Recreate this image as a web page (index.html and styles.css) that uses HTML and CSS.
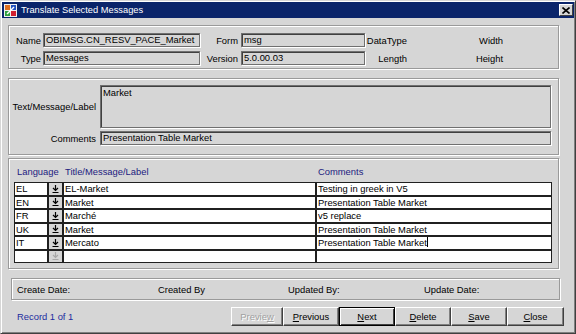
FILE: index.html
```html
<!DOCTYPE html>
<html lang="en">
<head>
  <meta charset="UTF-8">
  <title>Translate Selected Messages</title>
  <link rel="stylesheet" href="styles.css">
</head>
<body>

  <div class="window">
    <div class="titlebar">
      <svg class="appicon" width="13" height="13" viewBox="0 0 13 13">
        <rect x="0" y="0" width="13" height="13" fill="#f0f0f0"/>
        <rect x="1" y="1" width="5" height="5" fill="#e07020"/>
        <rect x="7" y="1" width="5" height="5" fill="#2050c0"/>
        <rect x="1" y="7" width="5" height="5" fill="#30a040"/>
        <rect x="7" y="7" width="5" height="5" fill="#d02030"/>
        <path d="M3 10 L10 3" stroke="#fff" stroke-width="1.5"/>
      </svg>
      <span class="title">Translate Selected Messages</span>
      <span class="closebox">
        <svg width="8" height="7" viewBox="0 0 8 7"><path d="M0.5 0.5 L7.5 6.5 M7.5 0.5 L0.5 6.5" stroke="#000" stroke-width="1.6"/></svg>
      </span>
    </div>

    <div class="group info">
      <label class="lbl">Name</label>
      <div class="field">OBIMSG.CN_RESV_PACE_Market</div>
      <label class="lbl">Form</label>
      <div class="field">msg</div>
      <span class="plain">DataType</span>
      <span class="plain">Width</span>

      <label class="lbl">Type</label>
      <div class="field">Messages</div>
      <label class="lbl">Version</label>
      <div class="field">5.0.00.03</div>
      <span class="plain">Length</span>
      <span class="plain">Height</span>
    </div>

    <div class="group message">
      <label class="lbl">Text/Message/Label</label>
      <div class="field area">Market</div>
      <label class="lbl">Comments</label>
      <div class="field">Presentation Table Market</div>
    </div>

    <div class="group translations">
      <div class="thead">
        <span>Language</span>
        <span>Title/Message/Label</span>
        <span>Comments</span>
      </div>
      <div class="rows" id="rows"></div>
    </div>

    <div class="group audit">
      <span>Create Date:</span>
      <span>Created By</span>
      <span>Updated By:</span>
      <span>Update Date:</span>
    </div>

    <div class="bottom">
      <span class="record">Record 1 of 1</span>
      <div class="buttons">
        <button class="btn preview" disabled>Previe<u>w</u></button>
        <button class="btn"><u>P</u>revious</button>
        <button class="btn default"><u>N</u>ext</button>
        <button class="btn"><u>D</u>elete</button>
        <button class="btn"><u>S</u>ave</button>
        <button class="btn close"><u>C</u>lose</button>
      </div>
    </div>
  </div>

  <script>
    const translations = [
      ['EL', 'EL-Market', 'Testing in greek in V5'],
      ['EN', 'Market', 'Presentation Table Market'],
      ['FR', 'Marché', 'v5 replace'],
      ['UK', 'Market', 'Presentation Table Market'],
      ['IT', 'Mercato', 'Presentation Table Market'],
      ['', '', '']
    ];

    const arrow = `<svg width="7" height="8" viewBox="0 0 7 8"><path d="M3.5 0 V5 M1 3 L3.5 5.5 L6 3 M0.5 7.5 H6.5" stroke="currentColor" stroke-width="1.2" fill="none"/></svg>`;

    const rows = document.getElementById('rows');
    translations.forEach(function (t, i) {
      const empty = t[0] === '';
      const editing = i === 4;
      rows.innerHTML += `
        <div class="cell">${t[0]}</div>
        <div class="lov ${empty ? 'off' : ''}">${arrow}</div>
        <div class="cell">${t[1]}</div>
        <div class="cell">${t[2]}${editing ? '<span class="caret"></span>' : ''}</div>
      `;
    });
  </script>

</body>
</html>
```

FILE: styles.css
```css
body {
  margin: 0;
  padding: 0;
  font-family: 'Liberation Sans', Arial, sans-serif;
  font-size: 9.4px;
  color: #000;
}

.window {
  width: 576px;
  height: 334px;
  box-sizing: border-box;
  background-color: #d6d6d6;
  border: 1px solid #404040;
  border-top-color: #d6d6d6;
  border-left-color: #d6d6d6;
  box-shadow: inset 1px 1px 0 #fff, inset -1px -1px 0 #808080;
  padding: 1px 1px 0 1px;
  display: flex;
  flex-direction: column;
}

.titlebar {
  height: 16px;
  background-color: #0a246a;
  display: flex;
  align-items: center;
  padding-left: 2px;
  padding-right: 1px;
}

.appicon {
  margin-right: 4px;
}

.title {
  color: #fff;
  font-size: 9.3px;
  flex: 1;
}

.closebox {
  width: 12px;
  height: 10px;
  background-color: #d6d6d6;
  border: 1px solid #404040;
  border-top-color: #fff;
  border-left-color: #fff;
  display: flex;
  align-items: center;
  justify-content: center;
}

.group {
  margin-left: 6px;
  width: 551px;
  box-sizing: border-box;
  border: 1px solid #9a9a9a;
  box-shadow: 1px 1px 0 #fff, inset 1px 1px 0 #fff;
}

.field {
  background-color: #d6d6d6;
  border: 1px solid #707070;
  box-shadow: inset 1px 1px 0 #404040, 1px 1px 0 #fff;
  box-sizing: border-box;
  padding: 0 2px;
  line-height: 12px;
  white-space: nowrap;
  overflow: hidden;
}

.lbl {
  text-align: right;
  padding-right: 2px;
  align-self: center;
  white-space: nowrap;
}

.plain {
  text-align: right;
  align-self: center;
}

/* name / form / type block */
.info {
  margin-top: 7px;
  height: 44px;
  padding-top: 7px;
  display: grid;
  grid-template-columns: 34px 157px 41px 124px 42px 96px;
  grid-auto-rows: 14px;
  row-gap: 4px;
}

.info .lbl:nth-of-type(2),
.info .lbl:nth-of-type(4) {
  padding-right: 3px;
}

/* text / comments block */
.message {
  margin-top: 9px;
  height: 77px;
  padding-top: 6px;
  display: grid;
  grid-template-columns: 91px 451px;
  grid-template-rows: 43px 14px;
  row-gap: 3px;
}

.message .lbl {
  padding-right: 4px;
}

.message .area {
  white-space: normal;
  padding-top: 1px;
}

/* translations table */
.translations {
  margin-top: 3px;
  height: 111px;
  padding: 7px 0 0 5px;
}

.thead {
  display: grid;
  grid-template-columns: 49px 253px 236px;
  height: 12px;
  line-height: 12px;
  color: #1c1c80;
  margin-bottom: 4px;
}

.thead span {
  padding-left: 2px;
}

.thead span:first-child {
  padding-left: 3px;
}

.rows {
  display: grid;
  grid-template-columns: 34px 15px 253px 236px;
  grid-auto-rows: 13.5px;
}

.cell {
  background-color: #fff;
  border: 1px solid #202020;
  box-sizing: border-box;
  padding-left: 1px;
  line-height: 11px;
  white-space: nowrap;
  overflow: hidden;
}

.lov {
  background-color: #d6d6d6;
  border: 1px solid #202020;
  box-sizing: border-box;
  display: flex;
  align-items: center;
  justify-content: center;
  color: #000;
}

.lov.off {
  color: #a8a8a8;
}

.caret {
  display: inline-block;
  width: 1px;
  height: 10px;
  background-color: #000;
  vertical-align: -1px;
}

/* audit block */
.audit {
  margin-top: 9px;
  margin-left: 9px;
  width: 549px;
  height: 22px;
  padding-left: 5px;
  display: grid;
  grid-template-columns: 141px 130px 136px 100px;
  align-items: center;
}

.bottom {
  display: flex;
  align-items: center;
  margin-top: 7px;
  padding-left: 15px;
}

.record {
  color: #1c2ca0;
  width: 214px;
}

.buttons {
  display: flex;
}

.btn {
  font-family: 'Liberation Sans', Arial, sans-serif;
  font-size: 9.4px;
  width: 56px;
  height: 19px;
  padding: 0;
  background-color: #d6d6d6;
  color: #000;
  border: 1px solid #404040;
  border-top-color: #fff;
  border-left-color: #fff;
  box-shadow: inset -1px -1px 0 #808080;
}

.btn.preview {
  width: 52px;
  color: #a0a0a0;
  text-shadow: 1px 1px 0 #fff;
}

.btn.default {
  border: 1px solid #000;
  box-shadow: inset 1px 1px 0 #fff, inset -1px -1px 0 #404040;
}

.btn.close {
  width: 57px;
}
```
